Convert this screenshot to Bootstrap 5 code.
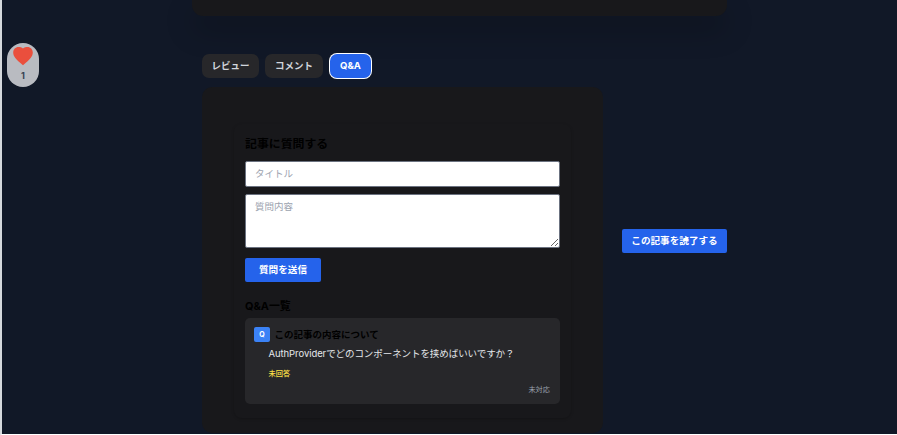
<!DOCTYPE html>
<html lang="ja">
<head>
<meta charset="utf-8">
<meta name="viewport" content="width=device-width, initial-scale=1">
<title>Q&amp;A</title>
<link href="https://cdn.jsdelivr.net/npm/bootstrap@5.3.0/dist/css/bootstrap.min.css" rel="stylesheet">
<style>
body{background:#111827;font-family:Inter,"Noto Sans CJK JP",sans-serif;font-size:10px;line-height:16px;color:#e5e7eb;height:435px;overflow:hidden;border-left:2px solid #d5d8dc;border-bottom:1px solid #fff}
.like-col{width:190px;padding:43px 0 0 5px}
.like-pill{width:32px;height:44px;border-radius:16px;background:#b9bbc1;color:#374151;font-weight:700;font-size:9px;line-height:12px;padding-top:4px}
.main-col{width:535px}
.article-end{height:16px;background:#18181b;border-radius:0 0 11px 11px;box-shadow:0 14px 28px rgba(0,0,0,.25)}
.tab-row{margin:38px 0 0 10px;gap:6px}
.tab-btn{height:24px;border-radius:7px;background:#27272a;color:#d1d5db;font-size:9.5px;font-weight:700;line-height:24px;padding:0;border:0;width:57px}
.tab-btn.second{width:58px}
.tab-btn.current{width:41px;margin-left:1px;background:#2563eb;color:#fff;box-shadow:0 0 0 1px #fff}
.panel-row{margin:9px 0 0 10px}
.qa-panel{width:401px;height:346px;background:#18181b;border-radius:10px;padding:37px 32px 0}
.qa-box{height:294px;padding:12px 11px 0;border-radius:8px;box-shadow:0 1px 3px rgba(0,0,0,.22)}
.qa-panel h2{font-size:11.9px;line-height:16px;font-weight:700;color:#000;margin:0 0 9px}
.qa-field{font-size:9.5px;line-height:16px;border:1px solid #6b7280;border-radius:2px;padding:4px 9px;background:#fff}
.qa-field::placeholder{color:#9ca3af}
input.qa-field{height:26px;min-height:0;padding-bottom:6px}
textarea.qa-field{height:54px;min-height:0;margin-top:7px}
.blue-btn{background:#2563eb;color:#fff;border:0;border-radius:2px;font-size:9.6px;font-weight:700;line-height:24px;height:24px;padding:0}
.send-btn{width:76px;margin-top:10px}
.finish-btn{width:105px;margin:142px 0 0 19px}
.qa-panel h3{font-size:10.9px;line-height:14px;font-weight:700;color:#000;margin:17px 0 5px}
.question{height:86px;background:#27272a;border-radius:5px;padding:9px 10px 0 9px}
.q-mark{width:16px;height:15px;border-radius:2px;background:#3b82f6;color:#fff;font-size:7px;font-weight:700;line-height:15px}
.q-title{font-size:9.5px;font-weight:700;color:#000;line-height:15px;margin-left:4.500px}
.q-body{font-size:9.5px;letter-spacing:-.07px;margin:4px 0 0 14.500px;line-height:15px}
.q-state{font-size:7.2px;font-weight:500;color:#fde047;margin:7px 0 0 14.500px;line-height:12px}
.q-status{font-size:7.2px;color:#9ca3af;line-height:12px;margin-top:4px}
</style>
<script src="https://cdn.jsdelivr.net/npm/bootstrap@5.3.0/dist/js/bootstrap.bundle.min.js"></script>
</head>
<body class="d-flex align-items-start">
<aside class="like-col flex-shrink-0">
<div class="like-pill d-flex flex-column align-items-center">
<svg width="20" height="19" viewBox="0 0 20 19"><path fill="#ea4f3d" d="M10 1.500C8.800 .4 6.900 0 5.500 0 2.500 0 .2 2.400 .2 5.600c0 3.600 2.400 6.800 9.800 12.700 7.400-5.900 9.800-9.100 9.800-12.700C19.800 2.400 17.500 0 14.500 0 13.100 0 11.200.4 10 1.500z"/></svg>
<span class="mt-1">1</span>
</div>
</aside>
<main class="main-col flex-shrink-0">
<div class="article-end"></div>
<div class="tab-row d-flex">
<button class="btn tab-btn">レビュー</button>
<button class="btn tab-btn second">コメント</button>
<button class="btn tab-btn current">Q&amp;A</button>
</div>
<div class="panel-row d-flex align-items-start">
<section class="qa-panel flex-shrink-0">
<div class="qa-box">
<h2>記事に質問する</h2>
<input class="form-control qa-field" placeholder="タイトル">
<textarea class="form-control qa-field" placeholder="質問内容"></textarea>
<button class="btn blue-btn send-btn d-block">質問を送信</button>
<h3>Q&amp;A一覧</h3>
<article class="question">
<div class="d-flex"><span class="q-mark text-center">Q</span><span class="q-title">この記事の内容について</span></div>
<p class="q-body">AuthProviderでどのコンポーネントを挟めばいいですか？</p>
<p class="q-state">未回答</p>
<p class="q-status text-end mb-0">未対応</p>
</article>
</div>
</section>
<button class="btn blue-btn finish-btn flex-shrink-0">この記事を読了する</button>
</div>
</main>
</body>
</html>
